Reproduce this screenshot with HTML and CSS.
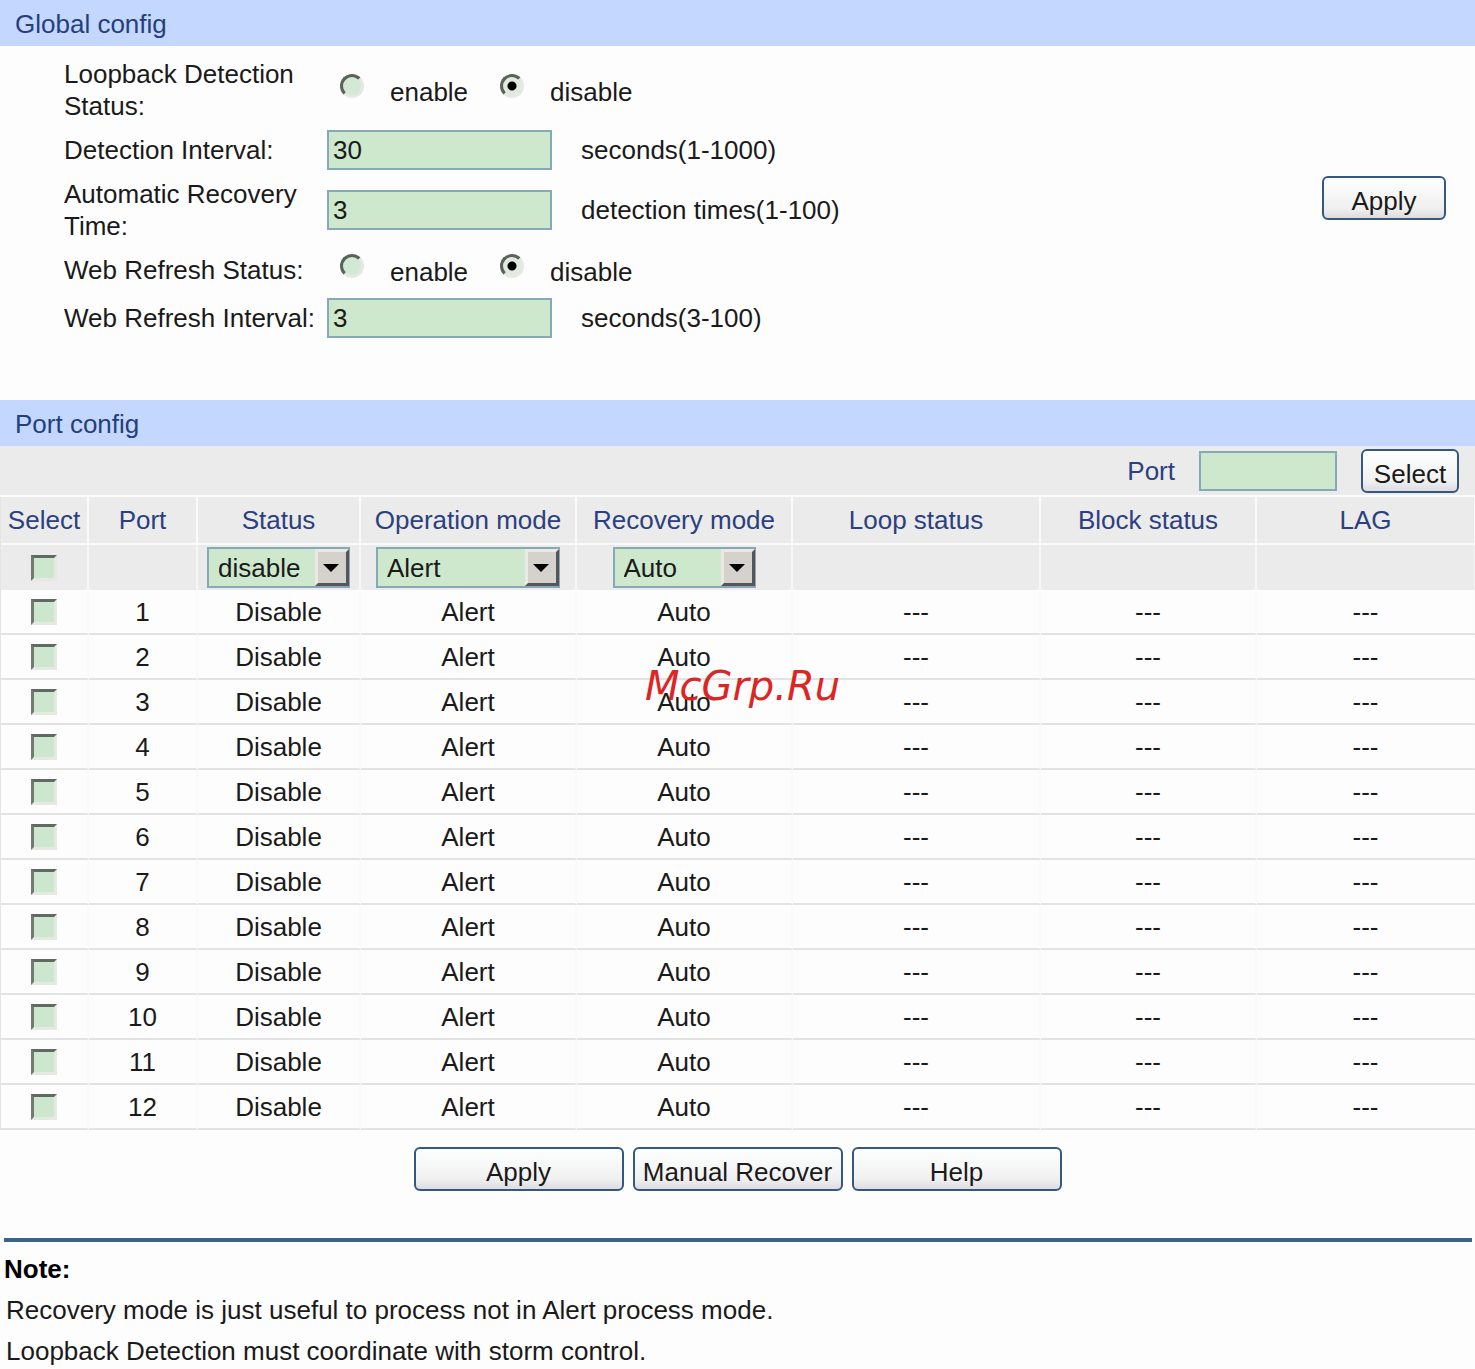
FILE: index.html
```
<!DOCTYPE html>
<html lang="en">

<head>
  <meta charset="UTF-8" />
  <meta name="viewport" content="width=device-width, initial-scale=1.0" />
  <title>Loopback Detection</title>
  <link rel="stylesheet" href="styles.css">
</head>

<body>
  <div class="page">
    <h2 class="section-title">Global config</h2>
    <form class="global-config">
      <div class="fields">
        <div class="field" role="radiogroup" aria-labelledby="loopStatus">
          <span class="field-name" id="loopStatus">Loopback Detection Status:</span>
          <div class="radios">
            <input type="radio" name="loop" id="loopEnable" /><label for="loopEnable">enable</label>
            <input type="radio" name="loop" id="loopDisable" checked /><label for="loopDisable">disable</label>
          </div>
        </div>
        <div class="field">
          <label class="field-name" for="interval">Detection Interval:</label>
          <input type="text" class="text-input" id="interval" value="30" />
          <span class="hint">seconds(1-1000)</span>
        </div>
        <div class="field">
          <label class="field-name" for="recovery">Automatic Recovery Time:</label>
          <input type="text" class="text-input" id="recovery" value="3" />
          <span class="hint">detection times(1-100)</span>
        </div>
        <div class="field" role="radiogroup" aria-labelledby="refreshStatus">
          <span class="field-name" id="refreshStatus">Web Refresh Status:</span>
          <div class="radios">
            <input type="radio" name="refresh" id="refreshEnable" /><label for="refreshEnable">enable</label>
            <input type="radio" name="refresh" id="refreshDisable" checked /><label for="refreshDisable">disable</label>
          </div>
        </div>
        <div class="field">
          <label class="field-name" for="refreshInterval">Web Refresh Interval:</label>
          <input type="text" class="text-input" id="refreshInterval" value="3" />
          <span class="hint">seconds(3-100)</span>
        </div>
      </div>
      <button type="button" class="btn btn-apply">Apply</button>
    </form>

    <h2 class="section-title">Port config</h2>
    <div class="toolbar">
      <label for="portSearch">Port</label>
      <input type="text" class="text-input port-input" id="portSearch" />
      <button type="button" class="btn btn-select">Select</button>
    </div>

    <table class="ports">
      <colgroup>
        <col class="c-select" /><col class="c-port" /><col class="c-status" /><col class="c-mode" />
        <col class="c-mode" /><col class="c-loop" /><col class="c-mode" /><col class="c-lag" />
      </colgroup>
      <thead>
        <tr>
          <th>Select</th><th>Port</th><th>Status</th><th>Operation mode</th>
          <th>Recovery mode</th><th>Loop status</th><th>Block status</th><th>LAG</th>
        </tr>
        <tr class="edit-row">
          <td><input type="checkbox" aria-label="Select all" /></td>
          <td></td>
          <td>
            <div class="drop drop-small">
              <select aria-label="Status"><option>disable</option><option>enable</option></select>
              <span class="drop-arrow"><svg viewBox="0 0 16 8"><path d="M0 0h16L8 8z" /></svg></span>
            </div>
          </td>
          <td>
            <div class="drop">
              <select aria-label="Operation mode"><option>Alert</option><option>Port based</option></select>
              <span class="drop-arrow"><svg viewBox="0 0 16 8"><path d="M0 0h16L8 8z" /></svg></span>
            </div>
          </td>
          <td>
            <div class="drop drop-small">
              <select aria-label="Recovery mode"><option>Auto</option><option>Manual</option></select>
              <span class="drop-arrow"><svg viewBox="0 0 16 8"><path d="M0 0h16L8 8z" /></svg></span>
            </div>
          </td>
          <td></td><td></td><td></td>
        </tr>
      </thead>
      <tbody>
        <tr><td><input type="checkbox" aria-label="Port 1" /></td><td>1</td><td>Disable</td><td>Alert</td><td>Auto</td><td>---</td><td>---</td><td>---</td></tr>
        <tr><td><input type="checkbox" aria-label="Port 2" /></td><td>2</td><td>Disable</td><td>Alert</td><td>Auto</td><td>---</td><td>---</td><td>---</td></tr>
        <tr><td><input type="checkbox" aria-label="Port 3" /></td><td>3</td><td>Disable</td><td>Alert</td><td>Auto</td><td>---</td><td>---</td><td>---</td></tr>
        <tr><td><input type="checkbox" aria-label="Port 4" /></td><td>4</td><td>Disable</td><td>Alert</td><td>Auto</td><td>---</td><td>---</td><td>---</td></tr>
        <tr><td><input type="checkbox" aria-label="Port 5" /></td><td>5</td><td>Disable</td><td>Alert</td><td>Auto</td><td>---</td><td>---</td><td>---</td></tr>
        <tr><td><input type="checkbox" aria-label="Port 6" /></td><td>6</td><td>Disable</td><td>Alert</td><td>Auto</td><td>---</td><td>---</td><td>---</td></tr>
        <tr><td><input type="checkbox" aria-label="Port 7" /></td><td>7</td><td>Disable</td><td>Alert</td><td>Auto</td><td>---</td><td>---</td><td>---</td></tr>
        <tr><td><input type="checkbox" aria-label="Port 8" /></td><td>8</td><td>Disable</td><td>Alert</td><td>Auto</td><td>---</td><td>---</td><td>---</td></tr>
        <tr><td><input type="checkbox" aria-label="Port 9" /></td><td>9</td><td>Disable</td><td>Alert</td><td>Auto</td><td>---</td><td>---</td><td>---</td></tr>
        <tr><td><input type="checkbox" aria-label="Port 10" /></td><td>10</td><td>Disable</td><td>Alert</td><td>Auto</td><td>---</td><td>---</td><td>---</td></tr>
        <tr><td><input type="checkbox" aria-label="Port 11" /></td><td>11</td><td>Disable</td><td>Alert</td><td>Auto</td><td>---</td><td>---</td><td>---</td></tr>
        <tr><td><input type="checkbox" aria-label="Port 12" /></td><td>12</td><td>Disable</td><td>Alert</td><td>Auto</td><td>---</td><td>---</td><td>---</td></tr>
      </tbody>
    </table>

    <div class="actions">
      <button type="button" class="btn">Apply</button>
      <button type="button" class="btn">Manual Recover</button>
      <button type="button" class="btn">Help</button>
    </div>

    <div class="note">
      <h3>Note:</h3>
      <p>Recovery mode is just useful to process not in Alert process mode.</p>
      <p>Loopback Detection must coordinate with storm control.</p>
    </div>

    <div class="watermark"><span>McGrp.Ru</span></div>
  </div>
</body>

</html>
```
FILE: styles.css
```
* {
  box-sizing: border-box;
}

body {
  margin: 0;
  background: #fdfdfd;
  color: #1a1a1a;
  font-family: "Liberation Sans", Arial, sans-serif;
  font-size: 26px;
  line-height: 32px;
}

input,
select,
button {
  font: inherit;
  color: inherit;
  margin: 0;
}

.page {
  position: relative;
}

.section-title {
  margin: 0;
  padding: 8px 15px 6px;
  background: #c4d7fe;
  color: #243f7c;
  font-size: 26px;
  font-weight: normal;
}

/* global config */

.global-config {
  display: flex;
  align-items: center;
  justify-content: space-between;
  padding: 12px 29px 62px 64px;
}

.fields {
  display: flex;
  flex-direction: column;
  gap: 8px;
}

.field {
  display: flex;
  align-items: center;
  min-height: 40px;
}

.field-name {
  width: 263px;
}

.text-input {
  width: 225px;
  height: 40px;
  padding: 0 4px;
  border: 2px solid #86a9b8;
  border-radius: 0;
  background: #cde8cd;
}

.hint {
  margin-left: 29px;
}

.radios {
  display: flex;
  align-items: center;
  padding-left: 13px;
}

.radios label {
  margin: 4px 32px 0 26px;
}

input[type="radio"] {
  appearance: none;
  width: 24px;
  height: 24px;
  margin-bottom: 8px;
  border: 3px solid;
  border-color: #59635a #e6e8e4 #e6e8e4 #59635a;
  border-radius: 50%;
  background: #d3e9d6;
}

input[type="radio"]:checked {
  background: radial-gradient(circle, #000 4px, #e0eadf 5px);
}

input[type="checkbox"] {
  appearance: none;
  display: block;
  width: 26px;
  height: 26px;
  margin: 0 auto;
  border: 3px solid;
  border-color: #616a62 #e4eae2 #e4eae2 #707a71;
  background: #cce7ce;
}

.btn {
  width: 210px;
  height: 44px;
  padding: 6px 0 0;
  border: 2px solid #34587f;
  border-radius: 6px;
  background: linear-gradient(#fdffff, #f1f0f0 75%, #dcdce2);
  white-space: nowrap;
}

.btn-apply {
  width: 124px;
}

.btn-select {
  width: 98px;
}

/* port config */

.toolbar {
  display: flex;
  align-items: center;
  justify-content: flex-end;
  gap: 24px;
  height: 51px;
  padding-right: 16px;
  border-bottom: 2px solid #fcfcfc;
  background: #ebebeb;
  color: #2b4080;
}

.port-input {
  width: 138px;
}

.toolbar .btn {
  color: #1a1a1a;
}

.ports {
  width: 100%;
  table-layout: fixed;
  border-spacing: 0;
  border-left: 1px solid #e4e4e4;
  text-align: center;
}

.c-select {
  width: 88px;
}

.c-port {
  width: 109px;
}

.c-status {
  width: 163px;
}

.c-mode {
  width: 216px;
}

.c-loop {
  width: 248px;
}

.c-lag {
  width: 219px;
}

.ports th,
.ports td {
  height: 45px;
  padding: 0;
  white-space: nowrap;
}

.ports th {
  height: 48px;
  border-right: 2px solid #fafafa;
  border-bottom: 2px solid #fafafa;
  background: #ebebeb;
  color: #2b4080;
  font-weight: normal;
}

.edit-row td {
  border-right: 2px solid #f6f6f6;
  background: #ebebeb;
}

.ports tbody td {
  border-right: 2px solid #fafafa;
  border-bottom: 2px solid #e3e3e3;
}

.drop {
  position: relative;
  width: 184px;
  margin: 0 auto;
}

.drop-small {
  width: 143px;
}

.drop select {
  appearance: none;
  display: block;
  width: 100%;
  height: 41px;
  padding: 0 0 0 9px;
  border: 2px solid #86a9b8;
  border-radius: 0;
  background: #cde8cd;
}

.drop-arrow {
  position: absolute;
  top: 2px;
  right: 1px;
  bottom: 2px;
  width: 34px;
  display: flex;
  align-items: center;
  justify-content: center;
  padding-right: 2px;
  border: 3px solid;
  border-color: #ece9e4 #55565c #55565c #ece9e4;
  background: #d5d1cc;
  pointer-events: none;
}

.drop-arrow svg {
  width: 16px;
  height: 8px;
}

.actions {
  display: flex;
  justify-content: center;
  gap: 9px;
  padding: 17px 0 47px;
}

.note {
  margin: 0 3px 0 4px;
  padding-top: 7px;
  border-top: 4px solid #3b6588;
  line-height: 41px;
}

.note h3 {
  margin: 0;
  color: #000;
  font-size: 26px;
}

.note p {
  margin: 0 2px;
}

.watermark {
  position: absolute;
  inset: 0;
  display: flex;
  align-items: center;
  justify-content: center;
  padding-left: 10px;
  color: #dc2626;
  font-family: "DejaVu Sans", Verdana, sans-serif;
  font-size: 40px;
  font-style: italic;
  pointer-events: none;
}
```
